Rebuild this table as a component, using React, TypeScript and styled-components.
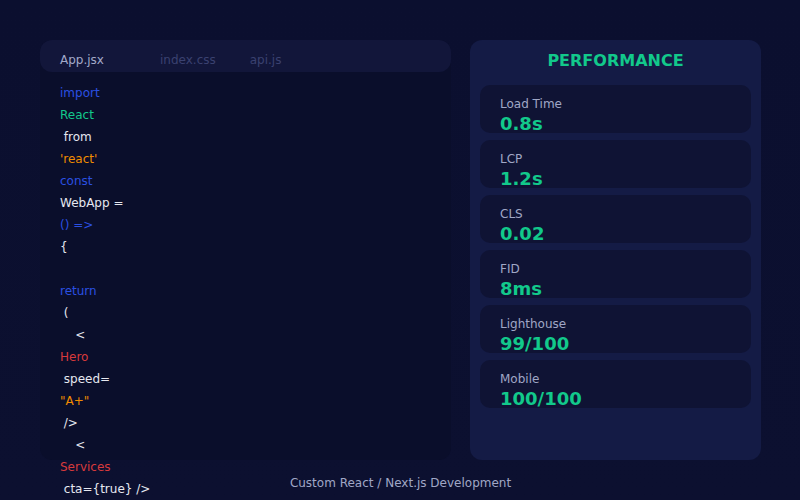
import styled, { createGlobalStyle } from "styled-components";

const GlobalStyle = createGlobalStyle`
  * {
    box-sizing: border-box;
  }
  html, body {
    margin: 0;
    padding: 0;
    background: #0b0f2e;
  }
  body {
    font-family: "DejaVu Sans", "Liberation Sans", sans-serif;
  }
`;

const Page = styled.div`
  width: 800px;
  height: 500px;
  padding: 40px 39px 0 40px;
  background: linear-gradient(180deg, #0b0f2f 0%, #0c1030 100%);
  display: flex;
  flex-direction: column;
  overflow: hidden;
`;

const Columns = styled.div`
  display: grid;
  grid-template-columns: 411px 291px;
  grid-template-rows: 420px;
  gap: 19px;
  height: 420px;
`;

const Editor = styled.div`
  background: #0a0e2b;
  border-radius: 12px;
  display: flex;
  flex-direction: column;
  min-height: 0;
`;

const TabBar = styled.div`
  flex: none;
  height: 32px;
  background: #12163a;
  border-radius: 12px;
  display: flex;
  align-items: center;
  padding: 7px 20px 0;
  gap: 34px;
`;

const Tab = styled.span<{ $active?: boolean }>`
  font-size: 12px;
  color: ${(p) => (p.$active ? "#a3a9c9" : "#3a4170")};
  min-width: ${(p) => (p.$active ? "66px" : "0")};
`;

const Code = styled.div`
  padding: 10px 20px 0;
  display: flex;
  flex-direction: column;
`;

type Tone = "keyword" | "name" | "string" | "tag" | "plain";

const tones: Record<Tone, string> = {
  keyword: "#2b50e2",
  name: "#12c98b",
  string: "#f08c00",
  tag: "#d83a3c",
  plain: "#e6e8f0",
};

const Line = styled.div<{ $tone: Tone }>`
  flex: none;
  font-size: 12px;
  line-height: 22px;
  min-height: 22px;
  white-space: pre;
  color: ${(p) => tones[p.$tone]};
`;

const Panel = styled.div`
  background: #141b45;
  border-radius: 12px;
  padding: 11px 10px 10px;
  display: flex;
  flex-direction: column;
  min-height: 0;
`;

const Title = styled.h2`
  margin: 0 0 15px;
  font-size: 16px;
  line-height: 19px;
  font-weight: 700;
  text-align: center;
  color: #12c98b;
`;

const Metrics = styled.div`
  display: flex;
  flex-direction: column;
  gap: 7px;
`;

const Metric = styled.div`
  height: 48px;
  border-radius: 10px;
  background: #0f1334;
  padding: 12px 20px 0;
  display: flex;
  flex-direction: column;
`;

const Label = styled.span`
  font-size: 12px;
  line-height: 14px;
  color: #a0a7c6;
`;

const Value = styled.span`
  margin-top: 2px;
  font-size: 18px;
  line-height: 21px;
  font-weight: 700;
  color: #12c98b;
`;

const Footer = styled.p`
  margin: 13px 0 0;
  font-size: 12px;
  line-height: 20px;
  text-align: center;
  color: #a0a7c6;
`;

const codeLines: [string, Tone][] = [
  ["import", "keyword"],
  ["React", "name"],
  [" from", "plain"],
  ["'react'", "string"],
  ["const", "keyword"],
  ["WebApp =", "plain"],
  ["() =>", "keyword"],
  ["{", "plain"],
  ["", "plain"],
  ["return", "keyword"],
  [" (", "plain"],
  ["    <", "plain"],
  ["Hero", "tag"],
  [" speed=", "plain"],
  ['"A+"', "string"],
  [" />", "plain"],
  ["    <", "plain"],
  ["Services", "tag"],
  [" cta={true} />", "plain"],
];

const metrics = [
  { label: "Load Time", value: "0.8s" },
  { label: "LCP", value: "1.2s" },
  { label: "CLS", value: "0.02" },
  { label: "FID", value: "8ms" },
  { label: "Lighthouse", value: "99/100" },
  { label: "Mobile", value: "100/100" },
];

export default function App() {
  return (
    <Page>
      <GlobalStyle />
      <Columns>
        <Editor>
          <TabBar>
            <Tab $active>App.jsx</Tab>
            <Tab>index.css</Tab>
            <Tab>api.js</Tab>
          </TabBar>
          <Code>
            {codeLines.map(([text, tone], i) => (
              <Line key={i} $tone={tone}>
                {text}
              </Line>
            ))}
          </Code>
        </Editor>
        <Panel>
          <Title>PERFORMANCE</Title>
          <Metrics>
            {metrics.map((m) => (
              <Metric key={m.label}>
                <Label>{m.label}</Label>
                <Value>{m.value}</Value>
              </Metric>
            ))}
          </Metrics>
        </Panel>
      </Columns>
      <Footer>Custom React / Next.js Development</Footer>
    </Page>
  );
}
